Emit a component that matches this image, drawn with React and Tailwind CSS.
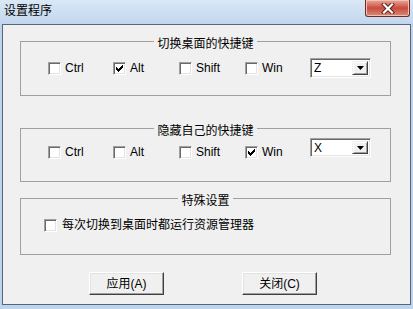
import React from 'react';

const CheckMark = () => (
  <svg width="7" height="7" viewBox="0 0 7 7" shapeRendering="crispEdges" className="block">
    {[2, 3, 4, 3, 2, 1, 0].map((y, x) => (
      <rect key={x} x={x} y={y} width="1" height="3" fill="#000" />
    ))}
  </svg>
);

const Box = ({ checked }) => (
  <span className="w-[13px] h-[13px] shrink-0 flex items-center justify-center bg-white border border-t-[#a0a0a0] border-l-[#a0a0a0] border-b-white border-r-white shadow-[inset_1px_1px_0_#696969,inset_-1px_-1px_0_#e3e3e3]">
    {checked && <CheckMark />}
  </span>
);

const Check = ({ label, checked, width, gap = 'ml-[4px]', top }) => (
  <div className={`flex items-center ${width} ${top}`}>
    <Box checked={checked} />
    <span className={`${gap} text-[12px] leading-[13px] text-black whitespace-nowrap`}>{label}</span>
  </div>
);

const Combo = ({ value, top, height }) => (
  <div className={`flex w-[61px] ${height} ${top} bg-white border border-t-[#a0a0a0] border-l-[#a0a0a0] border-b-white border-r-white shadow-[inset_1px_1px_0_#696969,inset_-1px_-1px_0_#e3e3e3] p-[2px]`}>
    <span className="flex-1 pl-[1px] text-[12px] leading-[14px] text-black">{value}</span>
    <span className="w-[16px] flex items-center justify-center bg-[#f0f0f0] border border-t-[#f0f0f0] border-l-[#f0f0f0] border-b-[#404040] border-r-[#404040] shadow-[inset_1px_1px_0_#fff,inset_-1px_-1px_0_#a0a0a0]">
      <svg width="7" height="4" viewBox="0 0 7 4" className="block">
        <polygon points="0,0 7,0 3.5,4" fill="#000" />
      </svg>
    </span>
  </div>
);

const GroupBox = ({ title, className, children }) => (
  <fieldset className={`ml-[17px] w-[371px] border border-[#a0a0a0] ${className}`}>
    <legend className="mx-auto px-[3px] pt-[6px] text-[12px] leading-[14px] text-black">{title}</legend>
    {children}
  </fieldset>
);

const Button = ({ children }) => (
  <button className="w-[75px] h-[23px] flex items-center justify-center bg-[#f0f0f0] border border-t-white border-l-white border-b-[#404040] border-r-[#404040] shadow-[inset_-1px_-1px_0_#a0a0a0,inset_1px_1px_0_#e3e3e3] text-[12px] leading-[14px] text-black">
    {children}
  </button>
);

export default function App() {
  const keys = [
    { label: 'Ctrl', width: 'w-[65px]' },
    { label: 'Alt', width: 'w-[66px]' },
    { label: 'Shift', width: 'w-[66px]' },
    { label: 'Win', width: 'w-[65px]' },
  ];

  return (
    <div className="w-[413px] h-[309px] flex flex-col bg-[#bed4ec] font-['Liberation_Sans','Noto_Sans_CJK_SC',sans-serif] overflow-hidden">
      {/* title bar */}
      <div className="h-[24px] shrink-0 flex items-start justify-between bg-gradient-to-b from-[#dae8f6] to-[#c1d6ee]">
        <span className="pl-[4px] pt-[4px] text-[12px] leading-[14px] text-black">设置程序</span>
        <div className="mr-[3px] w-[45px] h-[17px] flex items-center justify-center rounded-b-[3px] border border-t-0 border-[#6e2b24] bg-gradient-to-b from-[#e9a999] via-[#c84a3c] to-[#d98a78] shadow-[inset_0_0_0_1px_#f0c0b4]">
          <svg width="14" height="11" viewBox="0 0 14 11" className="block">
            <path d="M3 1.5 L11 9.5 M11 1.5 L3 9.5" stroke="#5a1c14" strokeWidth="4" strokeLinecap="square" />
            <path d="M3 1.5 L11 9.5 M11 1.5 L3 9.5" stroke="#fff" strokeWidth="2.2" strokeLinecap="square" />
          </svg>
        </div>
      </div>

      {/* client area */}
      <div className="ml-[2px] w-[409px] h-[281px] shrink-0 bg-[#f0f0f0] border border-[#55677c] overflow-hidden">
        <GroupBox title="切换桌面的快捷键" className="mt-[6px] pb-[17px]">
          <div className="flex items-start h-[27px] pl-[27px]">
            {keys.map((k) => (
              <Check key={k.label} label={k.label} width={k.width} checked={k.label === 'Alt'} top="mt-[11px]" />
            ))}
            <Combo value="Z" top="mt-[7px]" height="h-[20px]" />
          </div>
        </GroupBox>

        <GroupBox title="隐藏自己的快捷键" className="mt-[22px] pb-[23px]">
          <div className="flex items-start h-[20px] pl-[27px]">
            {keys.map((k) => (
              <Check key={k.label} label={k.label} width={k.width} checked={k.label === 'Win'} top="mt-[8px]" />
            ))}
            <Combo value="X" top="mt-0" height="h-[19px]" />
          </div>
        </GroupBox>

        <GroupBox title="特殊设置" className="mt-[6px] pb-[22px]">
          <div className="flex items-start h-[24px] pl-[23px]">
            <Check label="每次切换到桌面时都运行资源管理器" width="" gap="ml-[5px]" top="mt-[11px]" />
          </div>
        </GroupBox>

        <div className="mt-[17px] pl-[86px] flex gap-[78px]">
          <Button>应用(A)</Button>
          <Button>关闭(C)</Button>
        </div>
      </div>
    </div>
  );
}
